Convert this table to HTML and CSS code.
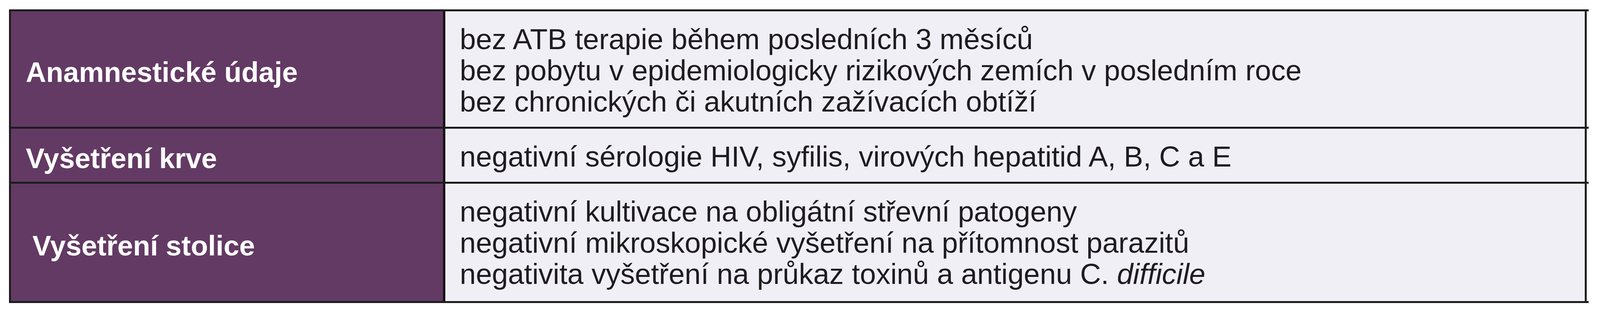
FILE: index.html
```html
<!DOCTYPE html>
<html lang="cs">
<head>
<meta charset="utf-8">
<title>Kritéria</title>
<link rel="stylesheet" href="styles.css">
</head>
<body>
<div class="table">
  <div class="row">
    <div class="head">Anamnestické údaje</div>
    <div class="body">
      <div class="line">bez ATB terapie během posledních 3 měsíců</div>
      <div class="line">bez pobytu v epidemiologicky rizikových zemích v posledním roce</div>
      <div class="line">bez chronických či akutních zažívacích obtíží</div>
    </div>
  </div>
  <div class="row">
    <div class="head">Vyšetření krve</div>
    <div class="body">
      <div class="line">negativní sérologie HIV, syfilis, virových hepatitid A, B, C a E</div>
    </div>
  </div>
  <div class="row">
    <div class="head head-indent">Vyšetření stolice</div>
    <div class="body body-last">
      <div class="line">negativní kultivace na obligátní střevní patogeny</div>
      <div class="line">negativní mikroskopické vyšetření na přítomnost parazitů</div>
      <div class="line">negativita vyšetření na průkaz toxinů a antigenu C. <i class="species">difficile</i></div>
    </div>
  </div>
</div>
</body>
</html>
```

FILE: styles.css
```css
html, body {
  margin: 0;
  padding: 0;
  background: #ffffff;
}

body {
  font-family: "Liberation Sans", Arial, sans-serif;
}

.table {
  margin: 24px 29px 0 23px;
  border-top: 5px solid #1c1c1e;
}

.row {
  display: grid;
  grid-template-columns: 1117px minmax(0, 1fr);
  padding-right: 5px;
  border-bottom: 5px solid #1c1c1e;
}

.head {
  box-sizing: border-box;
  display: flex;
  align-items: center;
  background: #633a64;
  color: #ffffff;
  border-left: 5px solid #1c1c1e;
  border-right: 6px solid #141214;
  padding: 16px 0 0 38px;
  font-size: 72px;
  font-weight: 700;
  white-space: nowrap;
}

.head-indent {
  padding-left: 55px;
}

.body {
  box-sizing: border-box;
  background: #f0eff6;
  border-right: 5px solid #1c1c1e;
  padding: 32px 0 24px 37px;
  color: #1e1c1f;
  font-size: 74px;
  line-height: 80px;
  white-space: nowrap;
  overflow: hidden;
}

.body-last {
  padding-bottom: 29px;
}

.species {
  font-style: italic;
}
```
